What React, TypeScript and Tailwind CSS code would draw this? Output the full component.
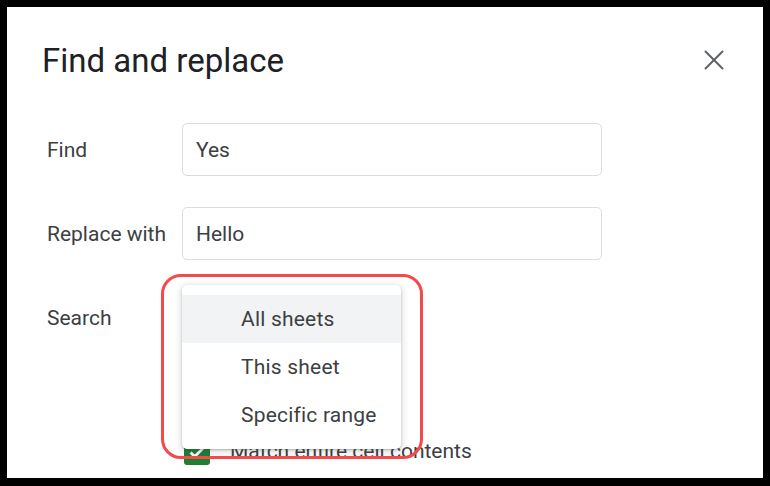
import { X } from "lucide-react";

const rowLabel = "w-[135px] shrink-0 pt-[2px] text-[21px] text-[#3c4043]";

function TextField({ value }: { value: string }) {
  return (
    <div className="flex h-[53px] w-[420px] items-center rounded-[5px] border border-[#dadce0] px-[13px] pt-[2px] text-[21px] text-[#3c4043]">
      {value}
    </div>
  );
}

function Checkbox({ checked }: { checked?: boolean }) {
  return (
    <div
      className={`flex h-[26px] w-[26px] items-center justify-center rounded-[3px] ${
        checked ? "bg-[#1e7e34]" : "border-2 border-[#5f6368]"
      }`}
    >
      {checked && (
        <svg viewBox="0 0 24 24" className="h-[22px] w-[22px]" fill="none" stroke="white" strokeWidth="3">
          <path d="M5 12.5l4.5 4.5L19 7.5" />
        </svg>
      )}
    </div>
  );
}

export default function App() {
  const options = ["All sheets", "This sheet", "Specific range"];

  return (
    <div className="h-[486px] w-[770px] bg-black pl-[7px] pt-[7px]" style={{ fontFamily: "Roboto, 'Liberation Sans', sans-serif" }}>
      <div className="relative h-[471px] w-[756px] overflow-hidden bg-white">
        {/* Header */}
        <div className="mt-[23px] flex h-[60px] items-center justify-between pl-[35px] pr-[32px]">
          <h1 className="pt-[2px] text-[33px] text-[#202124]">Find and replace</h1>
          <X className="h-[34px] w-[34px] text-[#5f6368]" strokeWidth={1.4} />
        </div>

        {/* Form */}
        <div className="mt-[33px] flex flex-col gap-[31px] pl-[40px]">
          <div className="flex items-center">
            <span className={rowLabel}>Find</span>
            <TextField value="Yes" />
          </div>
          <div className="flex items-center">
            <span className={rowLabel}>Replace with</span>
            <TextField value="Hello" />
          </div>
          <div className="flex items-center">
            <span className={rowLabel}>Search</span>
            <div className="h-[53px] w-[200px] rounded-[5px] border border-[#dadce0]" />
          </div>
        </div>

        <div className="mt-[92px] flex items-center gap-[20px] pl-[177px]">
          <Checkbox checked />
          <span className="text-[21px] text-[#3c4043]">Match entire cell contents</span>
        </div>

        {/* Dropdown menu */}
        <div className="absolute left-[175px] top-[278px] w-[219px] rounded-[5px] bg-white py-[10px] shadow-[0_2px_6px_2px_rgba(60,64,67,0.15),0_1px_2px_rgba(60,64,67,0.3)]">
          {options.map((o, i) => (
            <div
              key={o}
              className={`flex h-[48px] items-center pl-[59px] pt-[2px] text-[21px] tracking-[0.2px] text-[#3c4043] ${
                i === 0 ? "bg-[#f1f3f4]" : ""
              }`}
            >
              {o}
            </div>
          ))}
        </div>

        {/* Highlight */}
        <div className="pointer-events-none absolute left-[154px] top-[267px] h-[185px] w-[262px] rounded-[20px] border-[3px] border-[#f44a4a]" />
      </div>
    </div>
  );
}
